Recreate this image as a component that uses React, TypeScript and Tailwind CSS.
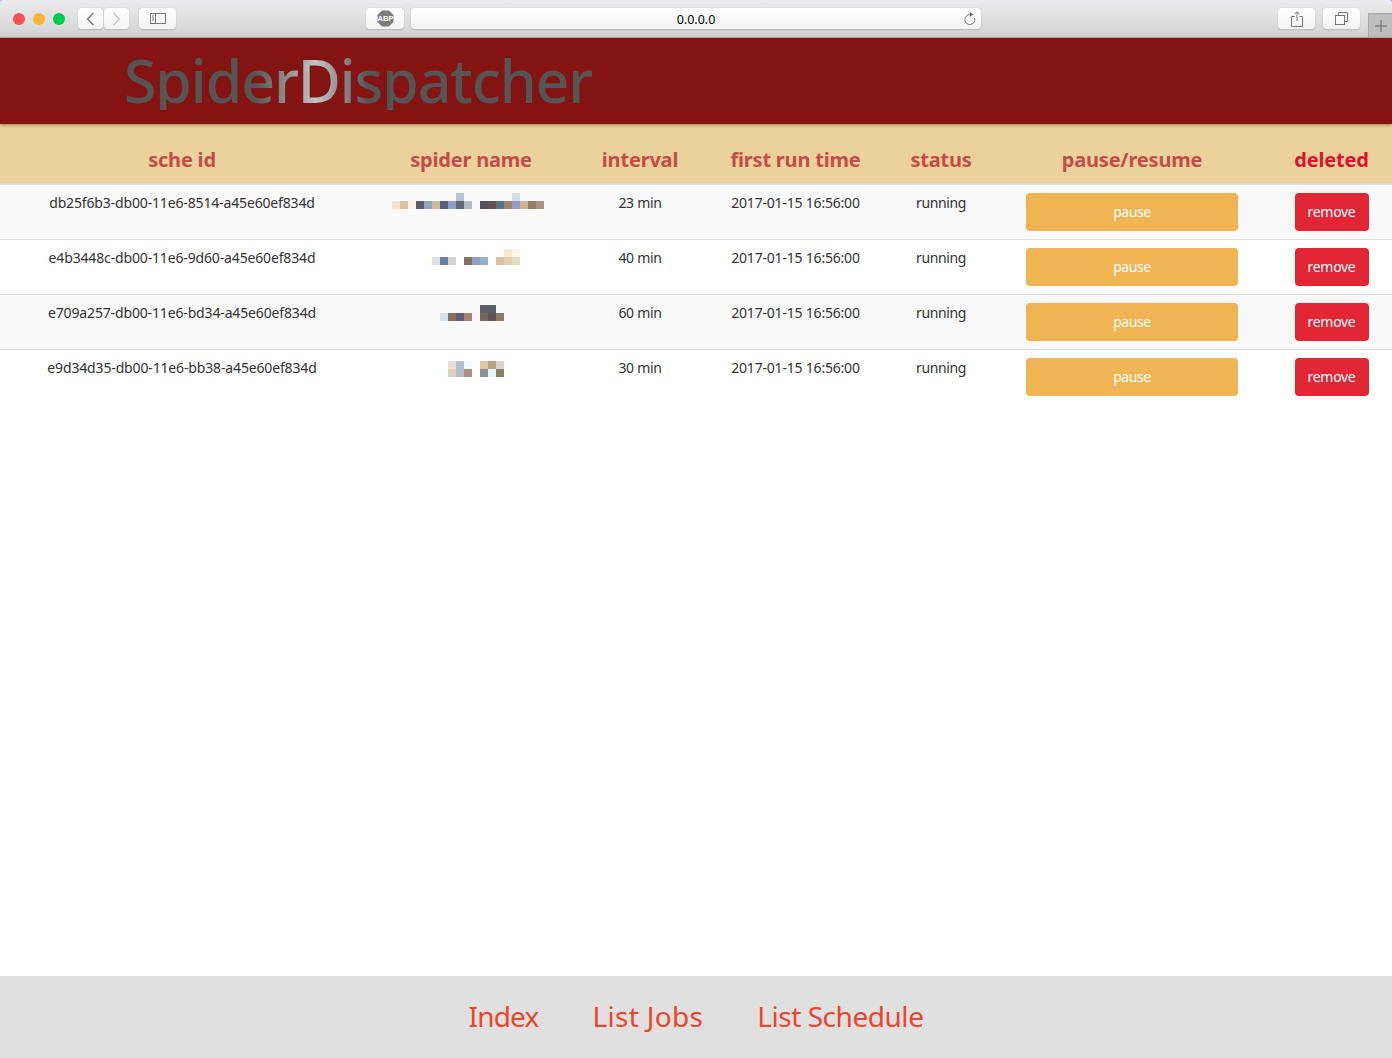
type Cell = [number, number, string];
const rows: { id: string; interval: string; mosaic: Cell[]; odd: boolean }[] = [
  {
    id: "db25f6b3-db00-11e6-8514-a45e60ef834d", interval: "23 min", odd: true,
    mosaic: [
      [456,193,"#bbc2dc"],[512,193,"#d3deE8"],
      [392,201,"#f3e2cb"],[400,201,"#d8c19f"],[408,201,"#f7f5e9"],[416,201,"#5c5c66"],[424,201,"#8aa8c2"],[432,201,"#d2b699"],[440,201,"#55607f"],[448,201,"#909ccb"],[456,201,"#5f6a78"],[464,201,"#b2bcc4"],
      [480,201,"#50505f"],[488,201,"#6a4f4e"],[496,201,"#56758c"],[504,201,"#a08468"],[512,201,"#909ccb"],[520,201,"#d3b094"],[528,201,"#8f8067"],[536,201,"#b09080"],
    ],
  },
  {
    id: "e4b3448c-db00-11e6-9d60-a45e60ef834d", interval: "40 min", odd: false,
    mosaic: [
      [504,194,"#fae6cb"],[512,194,"#fef6e2"],
      [424,202,"#fdfdf5"],[432,202,"#dce1e5"],[440,202,"#66829e"],[448,202,"#d5d2d3"],[464,202,"#85735e"],[472,202,"#939ecd"],[480,202,"#92b0ce"],[496,202,"#d9bf9c"],[504,202,"#ddd0b4"],[512,202,"#e0dcc8"],
    ],
  },
  {
    id: "e709a257-db00-11e6-bd34-a45e60ef834d", interval: "60 min", odd: true,
    mosaic: [
      [480,195,"#5e5f66"],[488,195,"#5a6164"],
      [440,203,"#cfe1ef"],[448,203,"#8d6c58"],[456,203,"#625c78"],[464,203,"#a28570"],[480,203,"#746758"],[488,203,"#625359"],[496,203,"#8b7b5f"],
    ],
  },
  {
    id: "e9d34d35-db00-11e6-bb38-a45e60ef834d", interval: "30 min", odd: false,
    mosaic: [
      [448,196,"#e8e0d8"],[456,196,"#b6bfcc"],[464,196,"#f2f8fd"],[480,196,"#e0c6a4"],[488,196,"#b9a183"],[496,196,"#dcd2ca"],
      [440,204,"#fafdfd"],[448,204,"#dfcfbc"],[456,204,"#b2bfc9"],[464,204,"#ae8e7e"],[480,204,"#8f9091"],[488,204,"#ecf4fb"],[496,204,"#8f7f60"],
    ],
  },
];

function ToolBtn({ className, children }: { className: string; children?: React.ReactNode }) {
  return (
    <div className={`h-[22px] flex items-center justify-center rounded-[4px] bg-gradient-to-b from-white to-[#f3f3f3] border-b border-[#bdbdbd] shadow-[0_0_1px_rgba(0,0,0,0.3)] ${className}`}>
      {children}
    </div>
  );
}

function Chrome() {
  return (
    <div className="bg-[#a9c4ea]">
      <div className="relative h-[38px] flex items-start pt-2 rounded-t-[4px] bg-gradient-to-b from-[#ececee] to-[#d2d2d2] border-b border-[#b0b0b0]">
        <div className="flex items-center gap-2 ml-[13px] h-[22px]">
          <span className="w-3 h-3 rounded-full bg-[#fc4e54]" />
          <span className="w-3 h-3 rounded-full bg-[#fdb43a]" />
          <span className="w-3 h-3 rounded-full bg-[#00ca4e]" />
        </div>
        <div className="flex gap-px ml-[13px]">
          <ToolBtn className="w-[25px]">
            <svg width="9" height="14" viewBox="0 0 9 14" fill="none" stroke="#7a7a7a" strokeWidth="1.4"><path d="M7.5 1 L1.5 7 L7.5 13" /></svg>
          </ToolBtn>
          <ToolBtn className="w-[25px]">
            <svg width="9" height="14" viewBox="0 0 9 14" fill="none" stroke="#c4c4c4" strokeWidth="1.4"><path d="M1.5 1 L7.5 7 L1.5 13" /></svg>
          </ToolBtn>
        </div>
        <ToolBtn className="w-[37px] ml-[10px]">
          <svg width="16" height="12" viewBox="0 0 16 12" fill="none" stroke="#777" strokeWidth="1"><rect x="0.5" y="0.5" width="15" height="10" /><path d="M5.5 0.5 V10.5 M2 3 H4 M2 5 H4 M2 7 H4" /></svg>
        </ToolBtn>
        <ToolBtn className="w-[38px] ml-[190px]">
          <svg width="17" height="17" viewBox="0 0 17 17">
            <path d="M5 0.5 H12 L16.5 5 V12 L12 16.5 H5 L0.5 12 V5 Z" fill="#7d7d7d" />
            <text x="8.5" y="11.2" textAnchor="middle" fontSize="7.5" fontWeight="700" fill="#fff" fontFamily="Liberation Sans, sans-serif">ABP</text>
          </svg>
        </ToolBtn>
        <ToolBtn className="relative w-[570px] ml-[7px]">
          <span className="text-[12.5px] text-black leading-none pt-1 font-['Noto_Sans',sans-serif]">0.0.0.0</span>
          <svg className="absolute right-[5px] top-[3px]" width="13" height="15" viewBox="0 0 13 15" fill="none" stroke="#777" strokeWidth="1"><path d="M7.6 3.6 A5 5 0 1 0 11.6 7" /><path d="M6.8 1 L10.4 3.4 L6.8 5.8 Z" fill="#666" stroke="none" /></svg>
        </ToolBtn>
        <ToolBtn className="w-[37px] ml-[297px]">
          <svg width="12" height="16" viewBox="0 0 12 16" fill="none" stroke="#777" strokeWidth="1"><path d="M3.5 5.5 H0.5 V15.5 H11.5 V5.5 H8.5 M6 10 V1 M3.5 3 L6 0.8 L8.5 3" /></svg>
        </ToolBtn>
        <ToolBtn className="w-[37px] ml-2">
          <svg width="13" height="13" viewBox="0 0 13 13" fill="none" stroke="#777" strokeWidth="1"><rect x="0.5" y="3.5" width="9" height="9" /><path d="M3.5 3.5 V0.5 H12.5 V9.5 H9.5" /></svg>
        </ToolBtn>
        <div className="absolute right-0 top-[13px] w-6 h-6 flex items-center justify-center bg-[#bdbdbd] border-l border-t border-[#a9a9a9]">
          <svg width="12" height="12" viewBox="0 0 12 12" stroke="#666" strokeWidth="1"><path d="M6 0 V12 M0 6 H12" /></svg>
        </div>
      </div>
    </div>
  );
}

const gridCols = "grid grid-cols-[364px_214px_124px_187px_104px_278px_121px]";

export default function App() {
  return (
    <div className="w-[1392px] h-[1058px] flex flex-col overflow-hidden bg-white font-['Noto_Sans',sans-serif]">
      <Chrome />
      <header className="relative z-10 h-[86px] pl-[124px] pb-0.5 flex items-center bg-[#841411] shadow-[0_1px_3px_rgba(90,40,0,0.5)]">
        <h1 className="text-[59px] font-medium leading-none tracking-[-1.1px] bg-[linear-gradient(90deg,#555_0%,#555_28%,#c4c4c4_41%,#555_52%,#555_100%)] bg-clip-text text-transparent">
          SpiderDispatcher
        </h1>
      </header>
      <main className="flex-1">
        <div className={`${gridCols} h-[61px] pt-3 items-center bg-[#ebd19b] border-b-2 border-[#dddddd] text-center text-[20px] font-bold text-[#c24f47] tracking-[-0.2px]`}>
          <div>sche id</div>
          <div>spider name</div>
          <div>interval</div>
          <div>first run time</div>
          <div>status</div>
          <div>pause/resume</div>
          <div className="text-[#d9142c]">deleted</div>
        </div>
        {rows.map((r, i) => (
          <div key={r.id} className={`${gridCols} h-[55px] text-center text-[14px] leading-5 text-[#333] ${r.odd ? "bg-[#f9f9f9]" : "bg-white"} ${i < 3 ? "border-b border-[#dddddd]" : ""}`}>
            <div className="pt-2 tracking-[-0.15px]">{r.id}</div>
            <div>
              <svg className="block" width="214" height="32">
                {r.mosaic.map(([x, y, c]) => (
                  <rect key={`${x}-${y}`} x={x - 364} y={y - 185} width="8" height="8" fill={c} />
                ))}
              </svg>
            </div>
            <div className="pt-2 tracking-[-0.3px]">{r.interval}</div>
            <div className="pt-2 tracking-[-0.2px]">2017-01-15 16:56:00</div>
            <div className="pt-2 tracking-[-0.4px]">running</div>
            <div className="pt-2 flex justify-center">
              <button className="w-[212px] h-[38px] rounded bg-[#f0b552] text-white text-[14px] tracking-[-0.4px]">pause</button>
            </div>
            <div className="pt-2 flex justify-center">
              <button className="w-[74px] h-[38px] rounded bg-[#e32636] text-white text-[14px] tracking-[-0.3px]">remove</button>
            </div>
          </div>
        ))}
      </main>
      <footer className="h-[82px] pb-0.5 flex items-center justify-center gap-[54px] bg-[#e0e0e0] text-[28px] text-[#e9462f]">
        <a className="tracking-[-0.8px]">Index</a>
        <a className="tracking-[0.3px]">List Jobs</a>
        <a className="tracking-[-0.45px]">List Schedule</a>
      </footer>
    </div>
  );
}
